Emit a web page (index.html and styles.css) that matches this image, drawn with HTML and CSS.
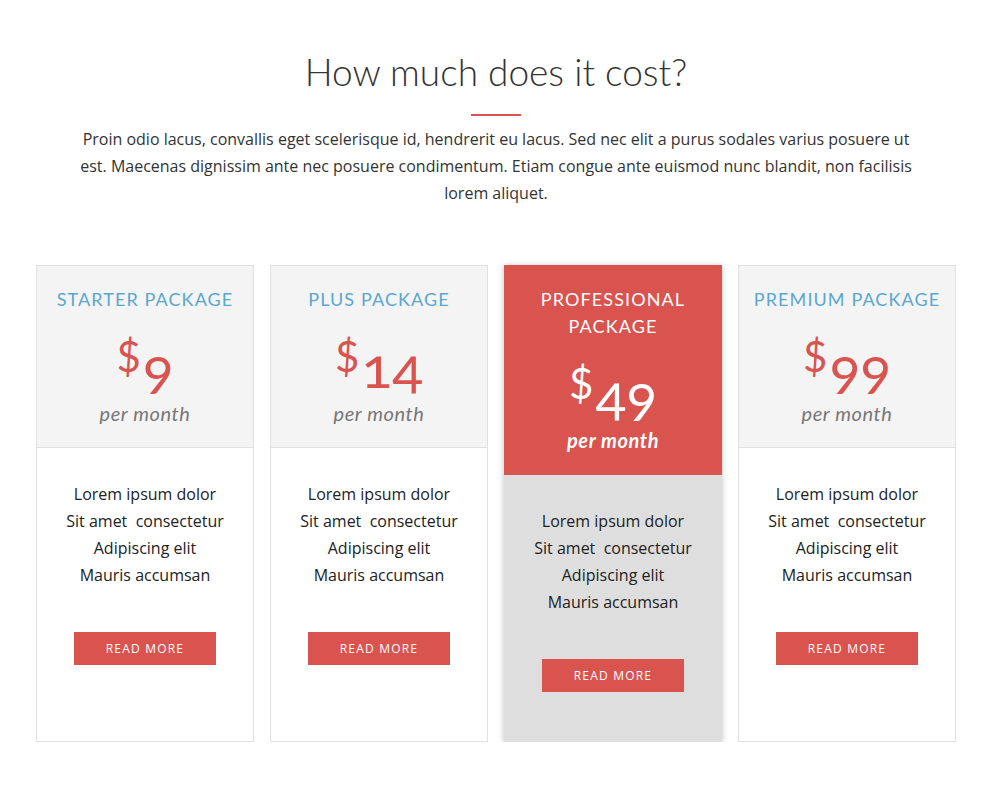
FILE: index.html
```html
<!DOCTYPE html>
<html lang="en">
<head>
<meta charset="utf-8">
<title>Pricing</title>
<link rel="stylesheet" href="styles.css">
</head>
<body>
<section class="pricing">
  <h2 class="pricing__title">How much does it cost?</h2>
  <div class="pricing__divider"></div>
  <p class="pricing__intro">Proin odio lacus, convallis eget scelerisque id, hendrerit eu lacus. Sed nec elit a purus sodales varius posuere ut est. Maecenas dignissim ante nec posuere condimentum. Etiam congue ante euismod nunc blandit, non facilisis lorem aliquet.</p>

  <div class="cards">
    <div class="card">
      <div class="card__head">
        <h3 class="card__name">Starter Package</h3>
        <div class="card__price"><span class="card__cur">$</span><span class="card__amt">9</span></div>
        <div class="card__per">per month</div>
      </div>
      <div class="card__body">
        <ul class="card__list">
          <li>Lorem ipsum dolor</li>
          <li>Sit amet&nbsp; consectetur</li>
          <li>Adipiscing elit</li>
          <li>Mauris accumsan</li>
        </ul>
        <a class="card__btn" href="#">Read more</a>
      </div>
    </div>

    <div class="card">
      <div class="card__head">
        <h3 class="card__name">Plus Package</h3>
        <div class="card__price"><span class="card__cur">$</span><span class="card__amt">14</span></div>
        <div class="card__per">per month</div>
      </div>
      <div class="card__body">
        <ul class="card__list">
          <li>Lorem ipsum dolor</li>
          <li>Sit amet&nbsp; consectetur</li>
          <li>Adipiscing elit</li>
          <li>Mauris accumsan</li>
        </ul>
        <a class="card__btn" href="#">Read more</a>
      </div>
    </div>

    <div class="card card--featured">
      <div class="card__head">
        <h3 class="card__name">Professional Package</h3>
        <div class="card__price"><span class="card__cur">$</span><span class="card__amt">49</span></div>
        <div class="card__per">per month</div>
      </div>
      <div class="card__body">
        <ul class="card__list">
          <li>Lorem ipsum dolor</li>
          <li>Sit amet&nbsp; consectetur</li>
          <li>Adipiscing elit</li>
          <li>Mauris accumsan</li>
        </ul>
        <a class="card__btn" href="#">Read more</a>
      </div>
    </div>

    <div class="card">
      <div class="card__head">
        <h3 class="card__name">Premium Package</h3>
        <div class="card__price"><span class="card__cur">$</span><span class="card__amt">99</span></div>
        <div class="card__per">per month</div>
      </div>
      <div class="card__body">
        <ul class="card__list">
          <li>Lorem ipsum dolor</li>
          <li>Sit amet&nbsp; consectetur</li>
          <li>Adipiscing elit</li>
          <li>Mauris accumsan</li>
        </ul>
        <a class="card__btn" href="#">Read more</a>
      </div>
    </div>
  </div>
</section>
</body>
</html>
```

FILE: styles.css
```css
* { box-sizing: border-box; }

html, body {
  margin: 0;
  padding: 0;
  background: #fff;
}

body {
  font-family: "Open Sans", "Liberation Sans", sans-serif;
  color: #333;
}

.pricing {
  padding: 50px 36px 0;
  text-align: center;
}

.pricing__title {
  margin: 0;
  font-family: Lato, "Open Sans", sans-serif;
  font-weight: 300;
  font-size: 37px;
  line-height: 43px;
  color: #333;
  letter-spacing: 0;
}

.pricing__divider {
  width: 50px;
  height: 2px;
  margin: 21px auto 0;
  background: #d9534f;
}

.pricing__intro {
  max-width: 850px;
  margin: 10px auto 0;
  font-size: 16px;
  line-height: 27px;
  color: #333;
}

.cards {
  display: grid;
  grid-template-columns: repeat(4, 1fr);
  gap: 16px;
  margin-top: 58px;
}

.card {
  display: flex;
  flex-direction: column;
  border: 1px solid #e0e0e0;
  background: #fff;
}

.card__head {
  padding: 20px 12px 20px;
  background: #f4f4f4;
  border-bottom: 1px solid #e0e0e0;
}

.card__name {
  margin: 0;
  font-family: Lato, "Open Sans", sans-serif;
  font-weight: 400;
  font-size: 18px;
  line-height: 27px;
  text-transform: uppercase;
  letter-spacing: 1.1px;
  color: #5aa7d2;
}

.card__price {
  height: 87px;
  line-height: 87px;
  font-family: Lato, "Open Sans", sans-serif;
  color: #d9534f;
  white-space: nowrap;
}

.card__cur {
  font-size: 42px;
  font-weight: 400;
  vertical-align: 16px;
  margin-right: 2px;
}

.card__amt {
  font-size: 57px;
  font-weight: 400;
  font-variant-numeric: oldstyle-nums;
}

.card__per {
  font-family: Lato, "Open Sans", sans-serif;
  font-style: italic;
  font-size: 20px;
  line-height: 27px;
  letter-spacing: 0.6px;
  color: #777;
}

.card__body {
  flex: 1;
  padding: 33px 8px 49px;
}

.card__list {
  list-style: none;
  margin: 0;
  padding: 0;
  font-size: 16px;
  line-height: 27px;
  color: #222;
}

.card__btn {
  display: inline-block;
  margin-top: 43px;
  width: 142px;
  height: 33px;
  line-height: 34px;
  background: #d9534f;
  color: #fff;
  font-size: 12px;
  font-weight: 400;
  letter-spacing: 1.2px;
  text-transform: uppercase;
  text-decoration: none;
}

.card--featured {
  border: 0;
  background: #dedede;
  box-shadow: 0 1px 6px rgba(0, 0, 0, 0.25);
}

.card--featured .card__head {
  padding: 21px 20px 21px;
  background: #d9534f;
  border-bottom: 0;
}

.card--featured .card__name,
.card--featured .card__price,
.card--featured .card__per {
  color: #fff;
}

.card--featured .card__per {
  font-weight: 700;
}

.card--featured .card__body {
  padding-bottom: 50px;
}
```
